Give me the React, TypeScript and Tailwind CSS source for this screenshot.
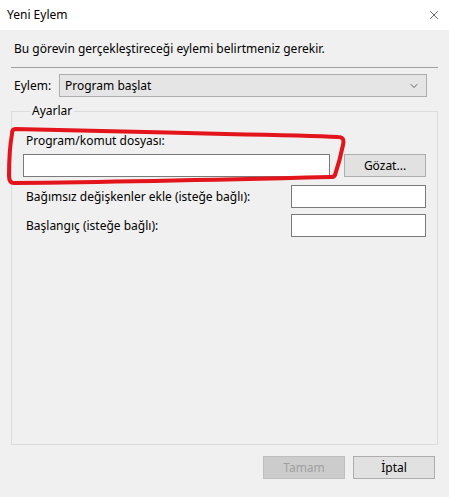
import { ChevronDown, X } from "lucide-react";

const font = { fontFamily: '"Noto Sans", "Segoe UI", sans-serif' };

function TextBox({ className = "" }: { className?: string }) {
  return <div className={`h-[23px] border border-[#7a7a7a] bg-white ${className}`} />;
}

function Button({ label, disabled = false }: { label: string; disabled?: boolean }) {
  return (
    <button
      className={
        disabled
          ? "flex h-[23px] w-[82px] items-center justify-center border border-[#bfbfbf] bg-[#cccccc] text-[12px] text-[#a0a0a0]"
          : "flex h-[23px] w-[82px] items-center justify-center border border-[#adadad] bg-[#e1e1e1] text-[12px] text-black"
      }
    >
      {label}
    </button>
  );
}

export default function App() {
  return (
    <div
      className="relative flex h-[497px] w-[449px] flex-col bg-[#f0f0f0] text-[12px] leading-4 text-black"
      style={font}
    >
      {/* title bar */}
      <div className="flex h-[30px] items-center justify-between bg-white pl-[7px] pr-[8px]">
        <span className="text-[12px]">Yeni Eylem</span>
        <X className="h-[14px] w-[14px]" strokeWidth={1} />
      </div>

      <div className="flex flex-1 flex-col px-[11px]">
        <p className="pl-[3px] pt-[11px]">Bu görevin gerçekleştireceği eylemi belirtmeniz gerekir.</p>
        <div className="mt-[10px] h-px bg-[#a0a0a0]" />

        <div className="mt-[6px] flex items-center">
          <span className="w-[48px] pl-[3px]">Eylem:</span>
          <div className="flex h-[23px] w-[368px] items-center justify-between border border-[#adadad] bg-[#e5e5e5] pl-[5px] pr-[6px]">
            <span>Program başlat</span>
            <ChevronDown className="h-[12px] w-[12px] text-[#333]" strokeWidth={1.5} />
          </div>
        </div>

        <fieldset className="mt-[6px] flex flex-1 flex-col border border-[#dcdcdc] px-[11px]">
          <legend className="ml-[7px] px-[2px] text-[12px]">Ayarlar</legend>

          <span className="mt-[14px] pl-[3px]">Program/komut dosyası:</span>
          <div className="mt-[5px] flex items-center justify-between">
            <TextBox className="w-[307px]" />
            <Button label="Gözat..." />
          </div>

          <div className="mt-[8px] flex items-center justify-between">
            <span className="pl-[3px]">Bağımsız değişkenler ekle (isteğe bağlı):</span>
            <TextBox className="w-[135px]" />
          </div>
          <div className="mt-[6px] flex items-center justify-between">
            <span className="pl-[3px]">Başlangıç (isteğe bağlı):</span>
            <TextBox className="w-[135px]" />
          </div>
        </fieldset>

        <div className="mb-[18px] mt-[11px] flex justify-end gap-[8px] pr-[3px]">
          <Button label="Tamam" disabled />
          <Button label="İptal" />
        </div>
      </div>

      {/* red annotation drawn over the dialog */}
      <svg className="pointer-events-none absolute inset-0" width="449" height="497" viewBox="0 0 449 497">
        <path
          d="M15 129 C60 130 150 132 225 134 C280 135 320 136 338 137 C344 137 344 141 343 145 C341 155 338 166 335 175 C334 177 333 177 330 177 C250 179 120 182 14 183 C10 183 9 180 9 176 C9 160 10 145 12 134 C12 131 13 129 15 129"
          fill="none"
          stroke="#e3141c"
          strokeWidth={4}
          strokeLinecap="round"
          strokeLinejoin="round"
        />
      </svg>
    </div>
  );
}
